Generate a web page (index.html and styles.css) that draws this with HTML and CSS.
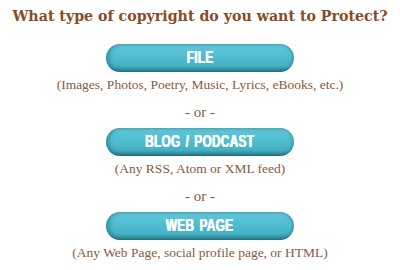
FILE: index.html
```html
<!DOCTYPE html>
<html>
<head>
<meta charset="utf-8">
<link rel="stylesheet" href="styles.css">
</head>
<body>
<div class="page">
  <h1 class="title">What type of copyright do you want to Protect?</h1>
  <div class="btn"><span class="btn-label">FILE</span></div>
  <p class="desc">(Images, Photos, Poetry, Music, Lyrics, eBooks, etc.)</p>
  <p class="or">- or -</p>
  <div class="btn"><span class="btn-label">BLOG / PODCAST</span></div>
  <p class="desc">(Any RSS, Atom or XML feed)</p>
  <p class="or">- or -</p>
  <div class="btn"><span class="btn-label">WEB PAGE</span></div>
  <p class="desc">(Any Web Page, social profile page, or HTML)</p>
</div>
</body>
</html>
```
FILE: styles.css
```css
html, body {
  margin: 0;
  padding: 0;
  background: #ffffff;
}
.page {
  width: 400px;
  height: 270px;
  display: flex;
  flex-direction: column;
  align-items: center;
  font-family: "Liberation Serif", "DejaVu Serif", serif;
}
.title {
  margin: 6px 0 0 0;
  font-family: "DejaVu Serif", "Liberation Serif", serif;
  font-size: 14.2px;
  font-weight: bold;
  color: #8a4b26;
  line-height: 21px;
  white-space: nowrap;
}
.btn {
  margin-top: 17px;
  width: 188px;
  height: 28px;
  box-sizing: border-box;
  border-radius: 14px;
  background: linear-gradient(to bottom, #62c8da 0%, #50bdd1 45%, #45b1c5 78%, #2a7d8c 100%);
  box-shadow: inset 3px 0 4px rgba(0,60,70,0.35), inset -2px 0 3px rgba(0,60,70,0.2);
  color: #ffffff;
  font-family: "Liberation Sans", "Arial", sans-serif;
  font-weight: bold;
  font-size: 16px;
  line-height: 27px;
  text-align: center;
}
.btn-label {
  display: inline-block;
  transform: scaleX(0.74);
  white-space: nowrap;
  letter-spacing: 0.4px;
  word-spacing: 2px;
  text-shadow: 0.4px 0 0 #ffffff, -0.4px 0 0 #ffffff;
}
.desc {
  margin: 4px 0 0 0;
  font-size: 13.5px;
  line-height: 18px;
  color: #8b5a3a;
}
.or {
  margin: 6px 0 0 0;
  font-size: 15px;
  line-height: 25px;
  color: #8b5a3a;
}
.or + .btn {
  margin-top: 3px;
}
```
